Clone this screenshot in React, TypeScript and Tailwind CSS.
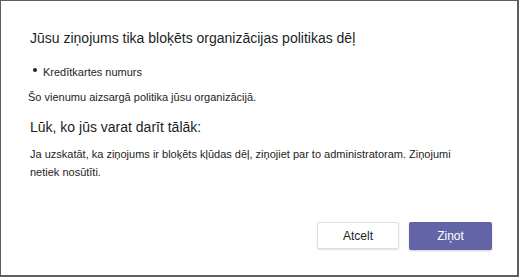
import React from 'react';

const App: React.FC = () => {
  return (
    <div className="w-[520px] h-[278px] bg-white">
      <div
        className="relative flex flex-col w-[519px] h-[277px] bg-white border-t border-l border-r-2 border-b-2 border-[#5e5e5e] text-[#252423]"
        style={{ fontFamily: '"Liberation Sans", Arial, sans-serif' }}
      >
        {/* Title */}
        <h1 className="mt-[27px] ml-[29px] text-[14px] leading-[20px] font-normal text-[#201f1e]">
          Jūsu ziņojums tika bloķēts organizācijas politikas dēļ
        </h1>

        {/* Blocked content */}
        <ul className="mt-[16px] ml-[32px] text-[11px] leading-[16px]">
          <li className="flex items-center">
            <span className="w-[4px] h-[4px] bg-[#252423] rounded-full mr-[6px] mb-[4px]"></span>
            Kredītkartes numurs
          </li>
        </ul>
        <p className="mt-[9px] ml-[27px] text-[11px] leading-[16px]">
          Šo vienumu aizsargā politika jūsu organizācijā.
        </p>

        {/* Next steps */}
        <h2 className="mt-[12px] ml-[29px] text-[14px] leading-[20px] font-normal text-[#201f1e]">
          Lūk, ko jūs varat darīt tālāk:
        </h2>
        <p className="mt-[8px] ml-[29px] text-[11px] leading-[18px]">
          Ja uzskatāt, ka ziņojums ir bloķēts kļūdas dēļ, ziņojiet par to administratoram. Ziņojumi
          <br />
          netiek nosūtīti.
        </p>

        {/* Actions */}
        <div className="mt-auto mb-[25px] mr-[25px] flex justify-end gap-[10px]">
          <button className="w-[82px] h-[27px] bg-white border border-[#e1dfdd] rounded-[2px] shadow-[0_1px_2px_rgba(0,0,0,0.12)] text-[12px] text-[#252423]">
            Atcelt
          </button>
          <button className="w-[83px] h-[28px] bg-[#6264a7] rounded-[2px] shadow-[0_1px_2px_rgba(0,0,0,0.2)] text-[12px] text-white">
            Ziņot
          </button>
        </div>
      </div>
    </div>
  );
};

export default App;
